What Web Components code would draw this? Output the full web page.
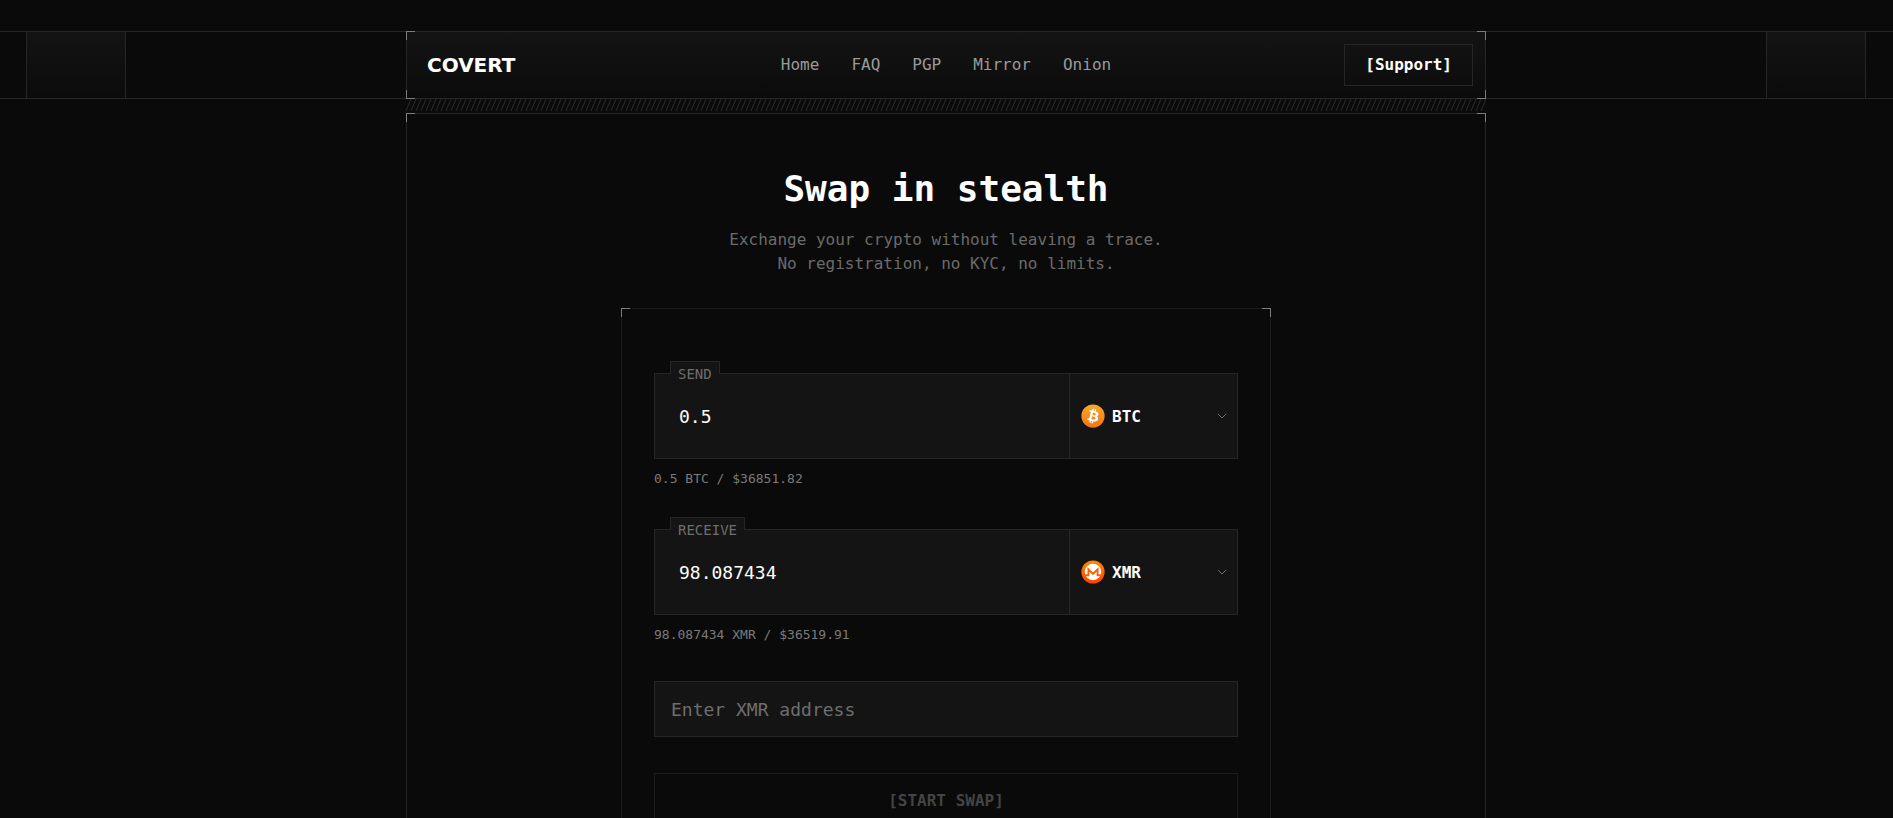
<!DOCTYPE html>
<html lang="en">
<head>
<meta charset="utf-8">
<meta name="viewport" content="width=device-width, initial-scale=1">
<title>Covert</title>
<style>
  html { background: #0a0a0a; scrollbar-width: none; }
  body { margin: 0; }
</style>
</head>
<body>
<covert-app></covert-app>

<script>
const define = (name, html, setup) => {
  const template = document.createElement("template");
  template.innerHTML = html;
  customElements.define(name, class extends HTMLElement {
    constructor() {
      super();
      this.attachShadow({ mode: "open" });
    }
    connectedCallback() {
      if (this.shadowRoot.childNodes.length) return;
      this.shadowRoot.append(template.content.cloneNode(true));
      if (setup) setup(this, this.shadowRoot);
    }
  });
};

// Bordered box with bright corner marks. "open" leaves out the lower pair.
define("corner-frame", `
  <style>
    :host { display: block; position: relative; box-sizing: border-box; border: 1px solid var(--line); }
    :host([open]) { border-bottom: 0; }
    i { position: absolute; width: 8px; height: 8px; border: 0 solid #7d7d7d; pointer-events: none; }
    .tl { top: -1px; left: -1px; border-width: 1px 0 0 1px; }
    .tr { top: -1px; right: -1px; border-width: 1px 1px 0 0; }
    .bl { bottom: -1px; left: -1px; border-width: 0 0 1px 1px; }
    .br { bottom: -1px; right: -1px; border-width: 0 1px 1px 0; }
    :host([open]) .bl, :host([open]) .br { display: none; }
  </style>
  <slot></slot>
  <i class="tl"></i><i class="tr"></i><i class="bl"></i><i class="br"></i>
`);

define("nav-link", `
  <style>
    :host { display: block; }
    a { color: #9a9a9a; text-decoration: none; font-size: 16px; line-height: 24px; }
    a:hover { color: #fff; }
  </style>
  <a><slot></slot></a>
`, (host, root) => { root.querySelector("a").href = host.getAttribute("href"); });

define("top-bar", `
  <style>
    :host { display: grid; grid-template-columns: var(--gutter) minmax(0, 1080px) minmax(0, 1fr); margin-top: 31px; height: 68px; --line: #262626; }
    .side { min-width: 0; box-sizing: border-box; display: flex; border: solid var(--line); border-width: 1px 0; overflow: hidden; }
    .side::before { content: ""; flex: none; width: 98px; border: solid var(--line); border-width: 0 1px; background: var(--sheen); }
    .left { justify-content: flex-end; padding-right: min(280px, 100%); }
    .right { justify-content: flex-start; padding-left: min(280px, 100%); }
    corner-frame { background: var(--sheen); }
    .row { height: 66px; display: grid; grid-template-columns: 1fr auto 1fr; align-items: center; padding: 0 12px 0 20px; }
    .logo { justify-self: start; color: #fff; text-decoration: none; font: bold 20px/24px "DejaVu Sans", sans-serif; }
    nav { display: flex; gap: 32px; margin-right: 8px; }
    button { justify-self: end; height: 42px; padding: 0 20px; border: 1px solid var(--line); background: transparent; color: #fff; font: bold 16px/24px var(--mono); cursor: pointer; }
  </style>
  <div class="side left"></div>
  <corner-frame>
    <div class="row">
      <a class="logo" href="#">COVERT</a>
      <nav>
        <nav-link href="#home">Home</nav-link>
        <nav-link href="#faq">FAQ</nav-link>
        <nav-link href="#pgp">PGP</nav-link>
        <nav-link href="#mirror">Mirror</nav-link>
        <nav-link href="#onion">Onion</nav-link>
      </nav>
      <button type="button">[Support]</button>
    </div>
  </corner-frame>
  <div class="side right"></div>
`);

define("hatch-strip", `
  <style>
    :host { display: block; height: 14px; }
    svg { display: block; width: 100%; height: 12px; }
  </style>
  <svg aria-hidden="true">
    <defs>
      <pattern id="hatch" width="5" height="12" patternUnits="userSpaceOnUse">
        <path d="M-5 12 0 0M0 12 5 0M5 12 10 0" stroke="#2a2a2a" fill="none"/>
      </pattern>
    </defs>
    <rect width="100%" height="12" fill="url(#hatch)"/>
  </svg>
`);

const COINS = {
  BTC: `<svg viewBox="0 0 32 32" width="24" height="24" aria-hidden="true">
    <defs><linearGradient id="g" x1="0" y1="0" x2="0" y2="1"><stop stop-color="#f9a832"/><stop offset="1" stop-color="#f2750f"/></linearGradient></defs>
    <circle cx="16" cy="16" r="15.5" fill="url(#g)"/>
    <path fill="#fff" d="M23.189 14.02c.314-2.096-1.283-3.223-3.465-3.975l.708-2.84-1.728-.43-.69 2.765c-.454-.114-.92-.22-1.385-.326l.695-2.783L15.596 6l-.708 2.839c-.376-.086-.746-.17-1.104-.26l.002-.009-2.384-.595-.46 1.846s1.283.294 1.256.312c.7.175.826.638.805 1.006l-.806 3.235c.048.012.11.03.18.057l-.183-.045-1.13 4.532c-.086.212-.303.531-.793.41.018.025-1.256-.313-1.256-.313l-.858 1.978 2.25.561c.418.105.828.215 1.231.318l-.715 2.872 1.727.43.708-2.84c.472.127.93.245 1.378.357l-.706 2.828 1.728.43.715-2.866c2.948.558 5.164.333 6.097-2.333.752-2.146-.037-3.385-1.588-4.192 1.13-.26 1.98-1.003 2.207-2.538zm-3.95 5.538c-.533 2.147-4.148.986-5.32.695l.95-3.805c1.172.293 4.929.872 4.37 3.11zm.535-5.569c-.487 1.953-3.495.96-4.47.717l.86-3.45c.975.243 4.118.696 3.61 2.733z"/>
  </svg>`,
  XMR: `<svg viewBox="0 0 24 24" width="24" height="24" aria-hidden="true">
    <defs><linearGradient id="g" x1="0" y1="0" x2="0" y2="1"><stop stop-color="#ff8a00"/><stop offset="1" stop-color="#ff4200"/></linearGradient></defs>
    <circle cx="12" cy="12" r="11.6" fill="url(#g)"/>
    <circle cx="12" cy="12" r="8.3" fill="#fff"/>
    <path d="M3 15.2H7.4V9.4L12 14 16.6 9.4V15.2H21" fill="none" stroke="#ff6000" stroke-width="1.9"/>
  </svg>`
};

define("coin-icon", `
  <style>:host { display: block; width: 24px; height: 24px; } svg { display: block; }</style>
`, (host, root) => { root.append(document.createRange().createContextualFragment(COINS[host.getAttribute("coin")])); });

define("coin-select", `
  <style>
    :host { display: grid; grid-template: 1fr / 1fr; align-items: center; border-left: 1px solid var(--field-line); }
    select, coin-icon, .chevron { grid-area: 1 / 1; }
    select { width: 100%; height: 100%; appearance: none; border: 0; border-radius: 0; margin: 0; padding: 2px 32px 0 42px; background: transparent; color: #fff; font: bold 16px/24px var(--mono); cursor: pointer; }
    option { background: #141414; }
    coin-icon { margin-left: 11px; pointer-events: none; }
    .chevron { justify-self: end; margin-right: 10px; pointer-events: none; }
  </style>
  <select>
    <option>BTC</option>
    <option>XMR</option>
  </select>
  <svg class="chevron" width="10" height="6" viewBox="0 0 10 6" aria-hidden="true"><path d="M1 1 5 5 9 1" fill="none" stroke="#6a6a6a"/></svg>
`, (host, root) => {
  const select = root.querySelector("select");
  const icon = document.createElement("coin-icon");
  icon.setAttribute("coin", host.getAttribute("coin"));
  root.append(icon);
  select.value = host.getAttribute("coin");
  select.setAttribute("aria-label", host.getAttribute("label"));
});

define("amount-field", `
  <style>
    :host { display: block; }
    .box { position: relative; display: grid; grid-template-columns: 1fr 168px; height: 84px; border: 1px solid var(--field-line); background: var(--field); }
    label { position: absolute; top: -13px; left: 15px; box-sizing: border-box; height: 13px; padding: 0 7px; border: solid var(--field-line); border-width: 1px 1px 0; background: var(--field); color: #6e6e6e; font-size: 14px; line-height: 24px; }
    input { min-width: 0; border: 0; margin: 0; padding: 2px 24px 0; background: transparent; color: #fff; font: 18px/24px var(--mono); outline: none; }
    .worth { display: block; margin-top: 10px; color: #7a7a7a; font-size: 13px; line-height: 20px; }
  </style>
  <div class="box">
    <input id="amount" type="text" inputmode="decimal">
    <label for="amount"></label>
  </div>
  <output class="worth" for="amount"><slot></slot></output>
`, (host, root) => {
  root.querySelector("label").textContent = host.getAttribute("label");
  root.querySelector("input").value = host.getAttribute("value");
  const coin = document.createElement("coin-select");
  coin.setAttribute("coin", host.getAttribute("coin"));
  coin.setAttribute("label", host.getAttribute("label") + " coin");
  root.querySelector(".box").append(coin);
});

define("swap-form", `
  <style>
    :host { display: block; box-sizing: border-box; width: 100%; max-width: 650px; --line: #1b1b1b; --field: #141414; --field-line: #262626; }
    form { display: flex; flex-direction: column; padding: 64px 32px; }
    amount-field + amount-field { margin-top: 40px; }
    input { box-sizing: border-box; height: 56px; margin: 36px 0 0; padding: 0 16px; border: 1px solid var(--field-line); border-radius: 0; background: var(--field); color: #fff; font: 18px/24px var(--mono); outline: none; }
    input::placeholder { color: #6e6e6e; opacity: 1; }
    button { height: 56px; margin: 36px 0 0; border: 1px solid var(--line); background: transparent; color: #444; font: bold 16px/24px var(--mono); }
  </style>
  <corner-frame open>
    <form>
      <amount-field label="SEND" value="0.5" coin="BTC">0.5 BTC / $36851.82</amount-field>
      <amount-field label="RECEIVE" value="98.087434" coin="XMR">98.087434 XMR / $36519.91</amount-field>
      <input type="text" aria-label="XMR address" placeholder="Enter XMR address">
      <button type="submit" disabled>[START SWAP]</button>
    </form>
  </corner-frame>
`);

define("swap-hero", `
  <style>
    :host { display: block; --line: #262626; }
    .content { display: flex; flex-direction: column; align-items: center; padding-top: 52px; }
    h1 { margin: 0 0 16px; color: #fff; font-size: 36px; line-height: 46px; text-align: center; }
    p { margin: 0 0 32px; color: #6b6b6b; font-size: 16px; line-height: 24px; text-align: center; }
  </style>
  <corner-frame open>
    <div class="content">
      <h1>Swap in stealth</h1>
      <p>Exchange your crypto without leaving a trace.<br>No registration, no KYC, no limits.</p>
      <swap-form></swap-form>
    </div>
  </corner-frame>
`);

// --gutter is the space beside the centred column, rounded so that hairlines stay on whole pixels.
define("covert-app", `
  <style>
    :host {
      --mono: "DejaVu Sans Mono", "Liberation Mono", monospace;
      --sheen: linear-gradient(#141414, #0b0b0b);
      --gutter: max(0px, round(down, calc((100% - 1080px) / 2), 1px));
      display: flow-root; min-height: 100vh; background: #0a0a0a; font-family: var(--mono);
    }
    main { max-width: 1080px; margin-left: var(--gutter); }
  </style>
  <top-bar></top-bar>
  <main>
    <hatch-strip></hatch-strip>
    <swap-hero></swap-hero>
  </main>
`);
</script>
</body>
</html>
